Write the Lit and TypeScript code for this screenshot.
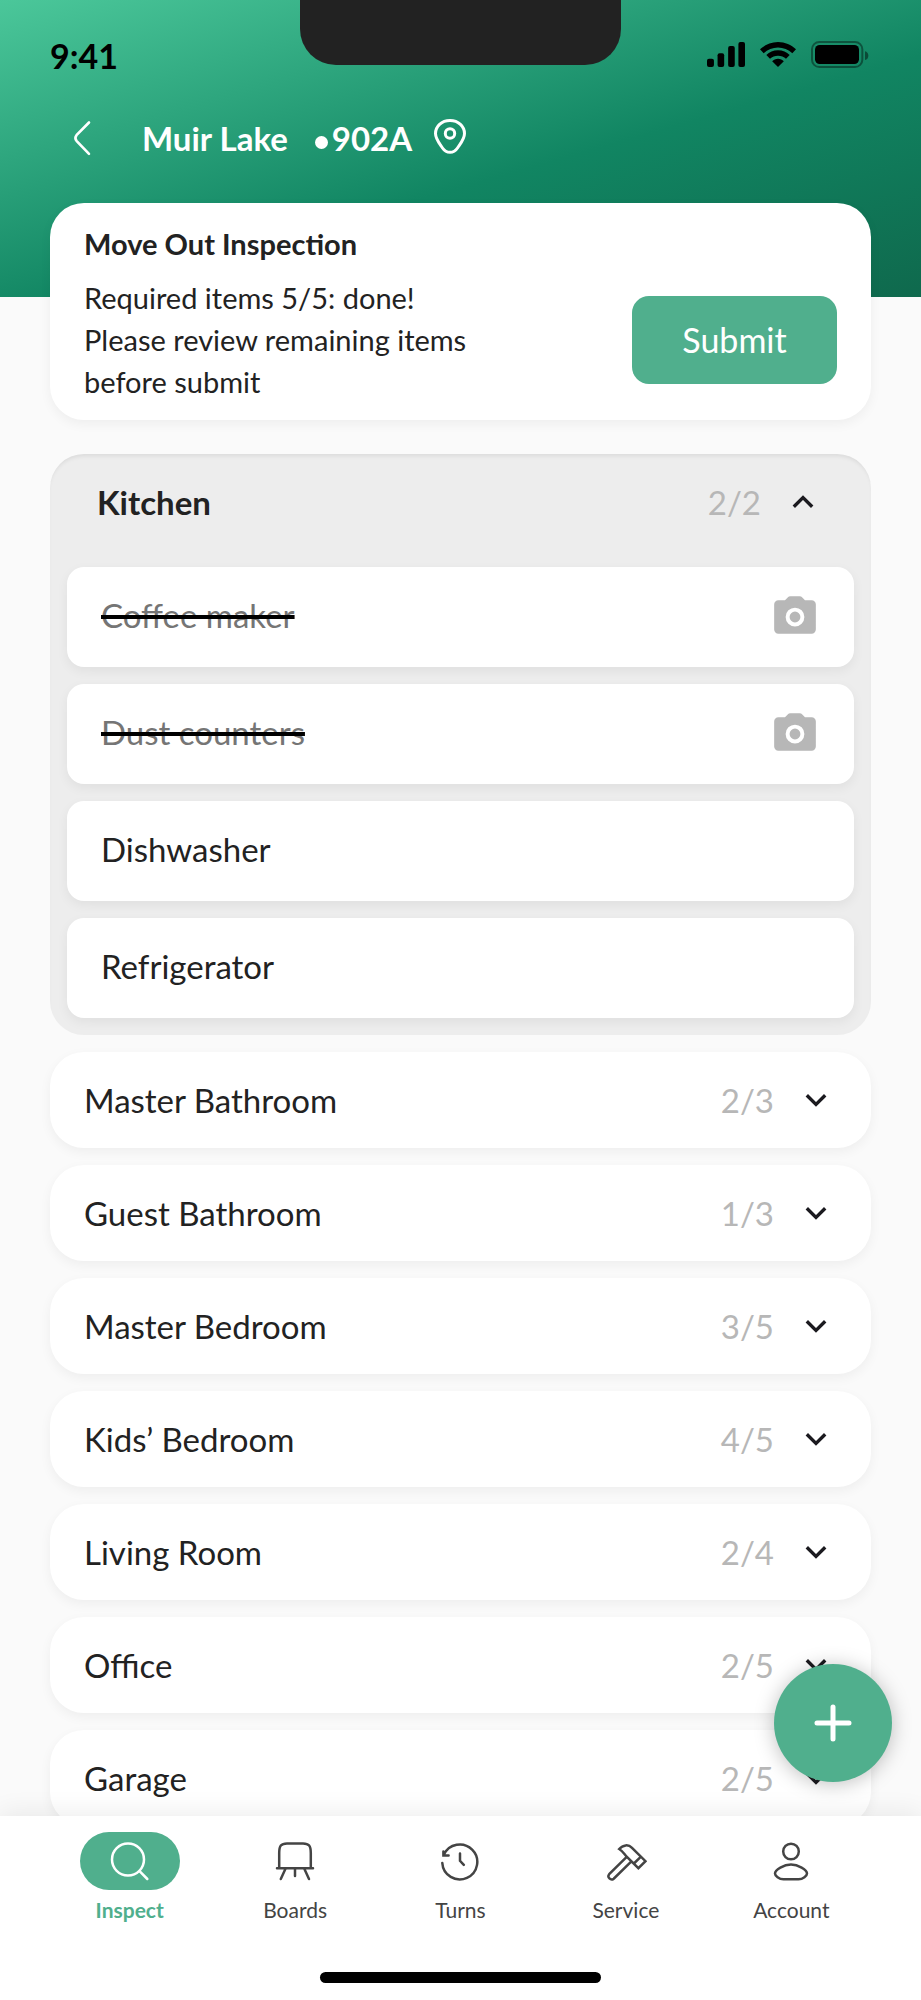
import { LitElement, html, css, svg, nothing } from "lit";
import { customElement, state } from "lit/decorators.js";
import { classMap } from "lit/directives/class-map.js";

interface Item {
  name: string;
  done?: boolean;
}

interface Room {
  name: string;
  count: string;
  items?: Item[];
}

const ROOMS: Room[] = [
  {
    name: "Kitchen",
    count: "2/2",
    items: [
      { name: "Coffee maker", done: true },
      { name: "Dust counters", done: true },
      { name: "Dishwasher" },
      { name: "Refrigerator" },
    ],
  },
  { name: "Master Bathroom", count: "2/3" },
  { name: "Guest Bathroom", count: "1/3" },
  { name: "Master Bedroom", count: "3/5" },
  { name: "Kids’ Bedroom", count: "4/5" },
  { name: "Living Room", count: "2/4" },
  { name: "Office", count: "2/5" },
  { name: "Garage", count: "2/5" },
];

const TABS = [
  {
    label: "Inspect",
    icon: svg`<circle cx="19" cy="19.5" r="16"/><path d="M30.8 31.4 38.3 39"/>`,
  },
  {
    label: "Boards",
    icon: svg`<path d="M5.2 28V13C5.2 6 7 3.4 13 3.4h16c6 0 7.8 2.6 7.8 9.6v15M3 28.2h36M11.6 28.5 6.8 39M21 28.5V36M30.2 28.5 35 39"/>`,
  },
  {
    label: "Turns",
    icon: svg`<path d="M3.3 23A17.5 17.5 0 1 0 4.8 14.8M4.4 11.6v3.8h5.2M21 13.6v7.2l3.8 4"/>`,
  },
  {
    label: "Service",
    icon: svg`<path d="M14.2 9C18 4.600 23.500 4.200 27 7.800L40.500 21.200 33.400 28.200 21.400 16.400C19.500 14.500 18.200 11.500 14.200 9ZM35.700 16.900 28.900 23.500M21.700 16.900 4.200 34.200A3.200 3.200 0 0 0 8.700 38.700L26.400 21.400"/>`,
  },
  {
    label: "Account",
    icon: svg`<circle cx="21" cy="11.500" r="7.800"/><path d="M21 24.600C28 24.600 37 29.500 37 33.400 37 35.600 33 39.300 28.500 39.300H13.500C9 39.300 5 35.600 5 33.400 5 29.500 14 24.600 21 24.600Z"/>`,
  },
];

@customElement("app-root")
export class AppRoot extends LitElement {
  @state() private open = new Set<string>(["Kitchen"]);
  @state() private tab = "Inspect";

  static styles = css`
    :host {
      display: block;
      font-family: Lato, "Liberation Sans", sans-serif;
      font-size: 33px;
      line-height: 42px;
      color: #222;
    }
    * {
      box-sizing: border-box;
    }
    button {
      font: inherit;
      color: inherit;
      border: 0;
      padding: 0;
      background: none;
      cursor: pointer;
    }
    h1,
    h2,
    h3,
    p,
    ul {
      margin: 0;
      padding: 0;
      font: inherit;
      list-style: none;
    }
    svg {
      display: block;
      flex: none;
    }
    .screen {
      position: relative;
      display: flex;
      flex-direction: column;
      height: 100vh;
      background: #fafafa;
      overflow: hidden;
    }
    .scroll {
      flex: 1;
      min-height: 0;
      overflow-y: auto;
      scrollbar-width: none;
    }
    .header {
      padding-bottom: 138px;
      background: linear-gradient(164deg, #4bc79a 0%, #118562 57%, #0f694d 100%);
    }
    .status {
      display: grid;
      grid-template-columns: 1fr 321px 1fr;
      height: 77px;
      padding: 0 50px;
      margin-bottom: 40px;
      color: #000;
      font-size: 34px;
    }
    .time {
      padding-top: 35px;
      font-weight: 700;
    }
    .notch {
      height: 65px;
      border-radius: 0 0 36px 36px;
      background: #222;
    }
    .signals {
      display: flex;
      justify-content: flex-end;
      align-items: center;
      gap: 15px;
      height: 42px;
      margin-top: 33px;
      padding-right: 2px;
    }
    .bar {
      display: flex;
      align-items: center;
      padding: 0 62px;
      color: #fff;
      font-weight: 700;
    }
    .back {
      display: block;
      margin-right: 38px;
      color: inherit;
    }
    .place {
      display: flex;
      align-items: center;
      font-weight: 700;
    }
    .dot {
      width: 13px;
      height: 13px;
      margin: 8px 4px 0 27px;
      border-radius: 50%;
      background: currentColor;
    }
    .pin {
      margin-left: 17px;
    }
    .main {
      display: flex;
      flex-direction: column;
      gap: 17px;
      margin-top: -94px;
      padding: 0 50px 17px;
    }
    .summary {
      margin-bottom: 17px;
      padding: 20px 34px 17px;
      border-radius: 34px;
      background: #fff;
      box-shadow: 0 4px 12px rgba(0, 0, 0, 0.05);
      font-size: 29px;
    }
    .summary-title {
      margin-bottom: 12px;
      font-weight: 700;
    }
    .summary-row {
      display: flex;
      align-items: center;
      justify-content: space-between;
      gap: 34px;
    }
    .summary-text {
      max-width: 420px;
    }
    .submit {
      flex: none;
      width: 205px;
      height: 88px;
      border-radius: 17px;
      background: #50af8d;
      color: #fff;
      font-size: 34px;
    }
    .room {
      border-radius: 34px;
      background: #fff;
      box-shadow: 0 4px 12px rgba(0, 0, 0, 0.05);
    }
    .room.open {
      background: #ededed;
      box-shadow: inset 0 4px 4px -2px rgba(0, 0, 0, 0.08);
    }
    .room-head {
      display: flex;
      align-items: center;
      gap: 21px;
      width: 100%;
      height: 96px;
      padding: 0 34px;
      text-align: left;
    }
    .open .room-head {
      padding: 0 47px;
      font-weight: 700;
    }
    .room-name {
      flex: 1;
    }
    .count {
      color: #b7b7b7;
      font-weight: 400;
    }
    .items {
      display: flex;
      flex-direction: column;
      gap: 17px;
      padding: 17px;
    }
    .item {
      display: flex;
      align-items: center;
      justify-content: space-between;
      height: 100px;
      padding: 0 34px;
      border-radius: 17px;
      background: #fff;
      box-shadow: 0 4px 12px rgba(0, 0, 0, 0.06);
    }
    .item-name {
      padding-bottom: 4px;
    }
    .done {
      color: #757575;
      text-decoration: line-through 4px #000;
    }
    .camera {
      color: #b7b7b7;
    }
    .fab {
      position: absolute;
      right: 29px;
      bottom: 218px;
      display: grid;
      place-items: center;
      width: 118px;
      height: 118px;
      border-radius: 50%;
      background: #50af8d;
      color: #fff;
      box-shadow: 0 2px 20px rgba(0, 0, 0, 0.25);
    }
    .tabs {
      position: relative;
      padding: 16px 47px 17px;
      background: #fff;
      box-shadow: 0 -4px 24px rgba(0, 0, 0, 0.07);
    }
    .tab-row {
      display: grid;
      grid-template-columns: repeat(5, 1fr);
      margin-bottom: 50px;
    }
    .tab {
      display: flex;
      flex-direction: column;
      align-items: center;
      gap: 8px;
      color: #444;
      font-size: 21px;
      line-height: 24px;
      text-decoration: none;
    }
    .pill {
      display: grid;
      place-items: center;
      width: 100px;
      height: 58px;
      border-radius: 29px;
    }
    .tab.active {
      color: #50af8d;
      font-weight: 700;
    }
    .active .pill {
      background: #50af8d;
      color: #fff;
    }
    .home {
      width: 281px;
      height: 11px;
      margin: 0 auto;
      border-radius: 6px;
      background: #000;
    }
  `;

  private toggle(name: string) {
    const next = new Set(this.open);
    if (!next.delete(name)) next.add(name);
    this.open = next;
  }

  private selectTab(event: Event, label: string) {
    event.preventDefault();
    this.tab = label;
  }

  private renderStatus() {
    return html`
      <div class="status">
        <span class="time">9:41</span>
        <span class="notch"></span>
        <span class="signals" aria-hidden="true">
          <svg width="38" height="25" viewBox="0 0 115 75">
            <rect y="50" width="21" height="25" rx="6" />
            <rect x="32" y="34" width="20" height="41" rx="6" />
            <rect x="64" y="12" width="20" height="63" rx="6" />
            <rect x="95" width="20" height="75" rx="6" />
          </svg>
          <svg width="36" height="25" viewBox="0 0 108 75">
            <path
              d="M54 0C75 0 94 9 108 22L97 34C85 23 70 16.500 54 16.500S23 23 11 34L0 22C14 9 33 0 54 0ZM54 25C68 25 80 30.500 89 39L78 50C72 44 63 41 54 41S36 44 30 50L19 39C28 30.500 40 25 54 25ZM54 50C61 50 67 53 71.500 57.500L54 75 36.500 57.500C41 53 47 50 54 50Z"
            />
          </svg>
          <svg width="58" height="27" viewBox="0 0 174 81">
            <rect
              x="3"
              y="3"
              width="151"
              height="75"
              rx="22"
              fill="none"
              stroke="#000"
              stroke-opacity=".4"
              stroke-width="6"
            />
            <rect x="12" y="12" width="132" height="57" rx="14" />
            <path d="M162 31C168 32 172 37 172 44S168 56 162 57Z" fill-opacity=".45" />
          </svg>
        </span>
      </div>
    `;
  }

  private renderChevron(up: boolean) {
    return html`<svg
      width="42"
      height="42"
      viewBox="0 0 42 42"
      fill="none"
      stroke="#1b1a1f"
      stroke-width="3.400"
      aria-hidden="true"
    >
      <path d=${up ? "M11.800 25.800l9.200-9.200 9.200 9.200" : "M11.800 16.200l9.200 9.200 9.200-9.200"} />
    </svg>`;
  }

  private renderItem(item: Item) {
    return html`<li class="item">
      <span class=${classMap({ "item-name": true, done: !!item.done })}>${item.name}</span>
      ${item.done
        ? html`<button class="camera" aria-label="Photos of ${item.name}">
            <svg width="50" height="50" viewBox="0 0 24 24" fill="currentColor">
              <path
                fill-rule="evenodd"
                d="M9.800 2h4.400q.8 0 1.300.6L16.800 4H20a2 2 0 0 1 2 2v12a2 2 0 0 1-2 2H4a2 2 0 0 1-2-2V6a2 2 0 0 1 2-2h3.200l1.300-1.400Q9 2 9.800 2ZM12 7.500a4.500 4.500 0 1 0 0 9 4.500 4.500 0 0 0 0-9ZM12 9.400a2.600 2.600 0 1 1 0 5.200 2.600 2.600 0 0 1 0-5.200Z"
              />
            </svg>
          </button>`
        : nothing}
    </li>`;
  }

  private renderRoom(room: Room) {
    const open = this.open.has(room.name);
    return html`<section class=${classMap({ room: true, open })}>
      <h3>
        <button class="room-head" aria-expanded=${open} @click=${() => this.toggle(room.name)}>
          <span class="room-name">${room.name}</span>
          <span class="count">${room.count}</span>
          ${this.renderChevron(open)}
        </button>
      </h3>
      ${open && room.items
        ? html`<ul class="items">
            ${room.items.map((item) => this.renderItem(item))}
          </ul>`
        : nothing}
    </section>`;
  }

  render() {
    return html`
      <div class="screen">
        <div class="scroll">
          <header class="header">
            ${this.renderStatus()}
            <div class="bar">
              <a class="back" href="#" aria-label="Back">
                <svg
                  width="42"
                  height="42"
                  viewBox="0 0 42 42"
                  fill="none"
                  stroke="currentColor"
                  stroke-width="2.600"
                  stroke-linecap="round"
                >
                  <path d="M27 5.500 14.500 18.200Q12.300 21 14.500 23.800L27 36.800" />
                </svg>
              </a>
              <h1 class="place">
                <span>Muir Lake</span>
                <span class="dot"></span>
                <span>902A</span>
              </h1>
              <svg
                class="pin"
                width="42"
                height="42"
                viewBox="0 0 42 42"
                fill="none"
                stroke="currentColor"
                stroke-width="3"
              >
                <path
                  d="M21 3.500C29.500 3.500 35.500 9.500 35.500 16.500 35.500 22 31.500 26.500 28.500 31 26.500 34 24.500 35.300 21 35.300S15.500 34 13.500 31C10.500 26.500 6.500 22 6.500 16.500 6.500 9.500 12.500 3.500 21 3.500Z"
                />
                <circle cx="21" cy="16.500" r="4.700" />
              </svg>
            </div>
          </header>
          <main class="main">
            <section class="summary">
              <h2 class="summary-title">Move Out Inspection</h2>
              <div class="summary-row">
                <p class="summary-text">
                  Required items 5/5: done!<br />Please review remaining items before submit
                </p>
                <button class="submit">Submit</button>
              </div>
            </section>
            ${ROOMS.map((room) => this.renderRoom(room))}
          </main>
        </div>
        <nav class="tabs">
          <div class="tab-row">
            ${TABS.map(
              (tab) => html`<a
                class=${classMap({ tab: true, active: tab.label === this.tab })}
                href="#"
                @click=${(e: Event) => this.selectTab(e, tab.label)}
              >
                <span class="pill">
                  <svg
                    width="42"
                    height="42"
                    viewBox="0 0 42 42"
                    fill="none"
                    stroke="currentColor"
                    stroke-width="2.500"
                    stroke-linecap="round"
                    aria-hidden="true"
                  >
                    ${tab.icon}
                  </svg>
                </span>
                <span>${tab.label}</span>
              </a>`,
            )}
          </div>
          <div class="home"></div>
        </nav>
        <button class="fab" aria-label="Add item">
          <svg
            width="42"
            height="42"
            viewBox="0 0 42 42"
            stroke="currentColor"
            stroke-width="5"
            stroke-linecap="round"
          >
            <path d="M21 5v32M5 21h32" />
          </svg>
        </button>
      </div>
    `;
  }
}
